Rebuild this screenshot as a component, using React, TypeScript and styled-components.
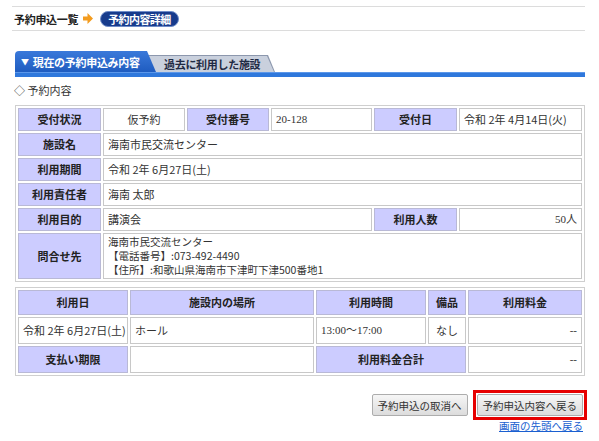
import React from 'react';
import styled, { createGlobalStyle } from 'styled-components';

const GlobalStyle = createGlobalStyle`
  body {
    margin: 0;
    background: #fff;
    font-family: "Noto Sans CJK JP", "Noto Sans", sans-serif;
    font-size: 11px;
    color: #333;
  }
`;

const Page = styled.div`
  width: 573px;
  margin-left: 12px;
  padding-top: 6px;
`;

const Crumbs = styled.div`
  display: flex;
  align-items: center;
  height: 23px;
  padding-left: 2px;
  border-top: 1px solid #dcdcdc;
  border-bottom: 1px solid #dcdcdc;
`;

const CrumbText = styled.span`
  font-weight: bold;
  color: #222;
  letter-spacing: -0.3px;
`;

const Arrow = styled.svg`
  margin: 0 7px 0 5px;
`;

const Pill = styled.span`
  display: inline-flex;
  align-items: center;
  height: 14px;
  padding: 0 7px;
  border-radius: 8px;
  background: #173b8c;
  border: 1px solid #6f8cc8;
  color: #fff;
  font-weight: bold;
  letter-spacing: -0.6px;
`;

const TabRow = styled.div`
  display: flex;
  align-items: flex-end;
  height: 21px;
  margin-top: 20px;
  padding-left: 3px;
`;

const ActiveTab = styled.div`
  position: relative;
  z-index: 1;
  box-sizing: border-box;
  width: 141px;
  height: 21px;
  padding-left: 6px;
  display: flex;
  align-items: center;
  border-radius: 4px 0 0 0;
  background: linear-gradient(#3a79da, #1f5cc0);
  clip-path: polygon(0 0, calc(100% - 9px) 0, 100% 100%, 0 100%);
  color: #fff;
  font-weight: bold;
  letter-spacing: -0.3px;
`;

const TabMark = styled.span`
  font-size: 8px;
  margin-right: 4px;
`;

const InactiveTab = styled.div`
  box-sizing: border-box;
  width: 128px;
  height: 17px;
  margin-left: -9px;
  padding: 1px 1px 0 1px;
  background: #8c97ad;
  clip-path: polygon(0 0, calc(100% - 7px) 0, 100% 100%, 0 100%);
`;

const InactiveFace = styled.div`
  height: 100%;
  display: flex;
  align-items: center;
  padding-left: 16px;
  background: #c9d0dd;
  clip-path: polygon(0 0, calc(100% - 7px) 0, 100% 100%, 0 100%);
  color: #1f2a44;
  font-weight: bold;
  letter-spacing: -0.3px;
`;

const TabBar = styled.div`
  margin-left: 3px;
  width: 570px;
  height: 5px;
  background: #2f78dc;
  border-top: 1px solid #5b97ea;
  box-sizing: border-box;
`;

const Section = styled.div`
  margin: 6px 0 0 2px;
  line-height: 14px;
  color: #333;
`;

const Table = styled.table<{ $gap: number }>`
  margin-top: ${(p) => p.$gap}px;
  margin-left: 3px;
  width: 570px;
  table-layout: fixed;
  border-collapse: separate;
  border-spacing: 2px;
  border: 1px solid #cfcfcf;
`;

const Label = styled.th<{ $lh?: number }>`
  border: 1px solid #b9b9d6;
  background: #ccccff;
  padding: 3px 4px;
  line-height: ${(p) => p.$lh ?? 15}px;
  font-weight: bold;
  text-align: center;
  color: #222;
  white-space: nowrap;
`;

const Cell = styled.td<{ $align?: string; $serif?: boolean; $lh?: number }>`
  border: 1px solid #c8c8c8;
  padding: 3px 4px;
  line-height: ${(p) => p.$lh ?? 15}px;
  text-align: ${(p) => p.$align ?? 'left'};
  font-family: ${(p) =>
    p.$serif ? '"Liberation Serif", "Noto Sans CJK JP", serif' : 'inherit'};
  color: #333;
  white-space: nowrap;
  overflow: hidden;
`;

const ContactCell = styled(Cell)`
  padding-top: 1px;
  padding-bottom: 1px;
`;

const ContactLine = styled.div`
  line-height: 14px;
  font-size: 10.5px;
`;

const Actions = styled.div`
  display: flex;
  justify-content: flex-end;
  align-items: center;
  gap: 5px;
  margin-top: 14px;
  margin-right: -2px;
`;

const Button = styled.button`
  height: 22px;
  padding: 0 5px;
  border: 1px solid #adadad;
  border-radius: 2px;
  background: linear-gradient(#f6f6f6, #dcdcdc);
  font-family: "Noto Sans CJK JP", sans-serif;
  font-size: 10.5px;
  color: #333;
`;

const RedFrame = styled.div`
  display: flex;
  padding: 1px;
  border: 3px solid #e60000;
`;

const TopLink = styled.a`
  display: block;
  text-align: right;
  padding-right: 2px;
  line-height: 12px;
  font-size: 10.5px;
  color: #1a5fd0;
  text-decoration: underline;
`;

function App() {
  return (
    <Page>
      <GlobalStyle />
      <Crumbs>
        <CrumbText>予約申込一覧</CrumbText>
        <Arrow width="10" height="11" viewBox="0 0 10 11">
          <path d="M0 3.5 H4.5 V0 L10 5.5 L4.5 11 V7.5 H0 Z" fill="#f39c1f" />
        </Arrow>
        <Pill>予約内容詳細</Pill>
      </Crumbs>

      <TabRow>
        <ActiveTab>
          <TabMark>▼</TabMark>現在の予約申込み内容
        </ActiveTab>
        <InactiveTab>
          <InactiveFace>過去に利用した施設</InactiveFace>
        </InactiveTab>
      </TabRow>
      <TabBar />

      <Section>◇ 予約内容</Section>

      <Table $gap={8}>
        <colgroup>
          <col style={{ width: 83 }} />
          <col style={{ width: 82 }} />
          <col style={{ width: 82 }} />
          <col style={{ width: 101 }} />
          <col style={{ width: 83 }} />
          <col style={{ width: 123 }} />
        </colgroup>
        <tbody>
          <tr>
            <Label>受付状況</Label>
            <Cell $align="center">仮予約</Cell>
            <Label>受付番号</Label>
            <Cell $serif>20-128</Cell>
            <Label>受付日</Label>
            <Cell>令和 2年 4月14日(火)</Cell>
          </tr>
          <tr>
            <Label>施設名</Label>
            <Cell colSpan={5}>海南市民交流センター</Cell>
          </tr>
          <tr>
            <Label>利用期間</Label>
            <Cell colSpan={5}>令和 2年 6月27日(土)</Cell>
          </tr>
          <tr>
            <Label>利用責任者</Label>
            <Cell colSpan={5}>海南 太郎</Cell>
          </tr>
          <tr>
            <Label>利用目的</Label>
            <Cell colSpan={3}>講演会</Cell>
            <Label>利用人数</Label>
            <Cell $align="right" $serif>50人</Cell>
          </tr>
          <tr>
            <Label>問合せ先</Label>
            <ContactCell colSpan={5}>
              <ContactLine>海南市民交流センター</ContactLine>
              <ContactLine>【電話番号】:073-492-4490</ContactLine>
              <ContactLine>【住所】:和歌山県海南市下津町下津500番地1</ContactLine>
            </ContactCell>
          </tr>
        </tbody>
      </Table>

      <Table $gap={5}>
        <colgroup>
          <col style={{ width: 110 }} />
          <col style={{ width: 184 }} />
          <col style={{ width: 110 }} />
          <col style={{ width: 38 }} />
          <col style={{ width: 114 }} />
        </colgroup>
        <tbody>
          <tr>
            <Label $lh={17}>利用日</Label>
            <Label $lh={17}>施設内の場所</Label>
            <Label $lh={17}>利用時間</Label>
            <Label $lh={17}>備品</Label>
            <Label $lh={17}>利用料金</Label>
          </tr>
          <tr>
            <Cell $lh={19} $align="center">令和 2年 6月27日(土)</Cell>
            <Cell $lh={19}>ホール</Cell>
            <Cell $lh={19} $serif>13:00〜17:00</Cell>
            <Cell $lh={19} $align="center">なし</Cell>
            <Cell $lh={19} $align="right" $serif>--</Cell>
          </tr>
          <tr>
            <Label $lh={19}>支払い期限</Label>
            <Cell $lh={19}></Cell>
            <Label $lh={19} colSpan={2}>利用料金合計</Label>
            <Cell $lh={19} $align="right" $serif>--</Cell>
          </tr>
        </tbody>
      </Table>

      <Actions>
        <Button>予約申込の取消へ</Button>
        <RedFrame>
          <Button>予約申込内容へ戻る</Button>
        </RedFrame>
      </Actions>
      <TopLink href="#top">画面の先頭へ戻る</TopLink>
    </Page>
  );
}

export default App;
